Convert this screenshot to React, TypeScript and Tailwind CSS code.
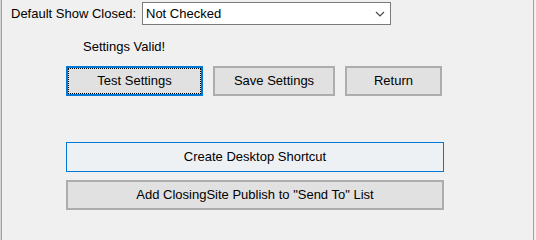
import React from "react";

const font = { fontFamily: '"Liberation Sans", Arial, sans-serif' };

const Button = ({ label, width }: { label: string; width: string }) => (
  <button
    className={`${width} h-[30px] border-2 border-[#adadad] bg-[#e1e1e1] text-[13px] text-black flex items-center justify-center`}
  >
    {label}
  </button>
);

export default function App() {
  return (
    <div className="w-[536px] h-[240px] bg-[#f0f0f0] flex overflow-hidden" style={font}>
      <div className="w-px bg-[#d4d4d4]" />
      <div className="w-px bg-[#6eb1e1]" />
      <div className="flex-1 flex flex-col">
        <div className="flex items-center mt-[2px] h-[23px]">
          <span className="ml-[9px] w-[131px] text-[13px] text-black">Default Show Closed:</span>
          <div className="w-[249px] h-[23px] bg-white border border-[#7a7a7a] flex items-center justify-between pl-[3px] pr-[5px]">
            <span className="text-[13px] text-black">Not Checked</span>
            <svg width="10" height="6" viewBox="0 0 10 6">
              <path d="M1 1 L5 5 L9 1" fill="none" stroke="#4a4a4a" strokeWidth="1.2" />
            </svg>
          </div>
        </div>

        <div className="ml-[81px] mt-[14px] h-[16px] flex items-center text-[13px] text-black">
          Settings Valid!
        </div>

        <div className="flex ml-[64px] mt-[11px] gap-[10px]">
          <button className="relative w-[137px] h-[30px] border-2 border-[#0078d7] bg-[#e1e1e1] text-[13px] text-black flex items-center justify-center">
            <span className="absolute inset-0 border border-dotted border-black" />
            Test Settings
          </button>
          <Button label="Save Settings" width="w-[122px]" />
          <Button label="Return" width="w-[97px]" />
        </div>

        <div className="flex flex-col ml-[64px] mt-[46px] gap-[8px]">
          <button className="w-[378px] h-[30px] border border-[#0078d7] bg-[#eef1f4] text-[13px] text-black flex items-center justify-center">
            Create Desktop Shortcut
          </button>
          <Button label={'Add ClosingSite Publish to "Send To" List'} width="w-[378px]" />
        </div>
      </div>
      <div className="w-px bg-[#6eb1e1]" />
      <div className="w-[2px] bg-[#f0f0f0]" />
    </div>
  );
}
